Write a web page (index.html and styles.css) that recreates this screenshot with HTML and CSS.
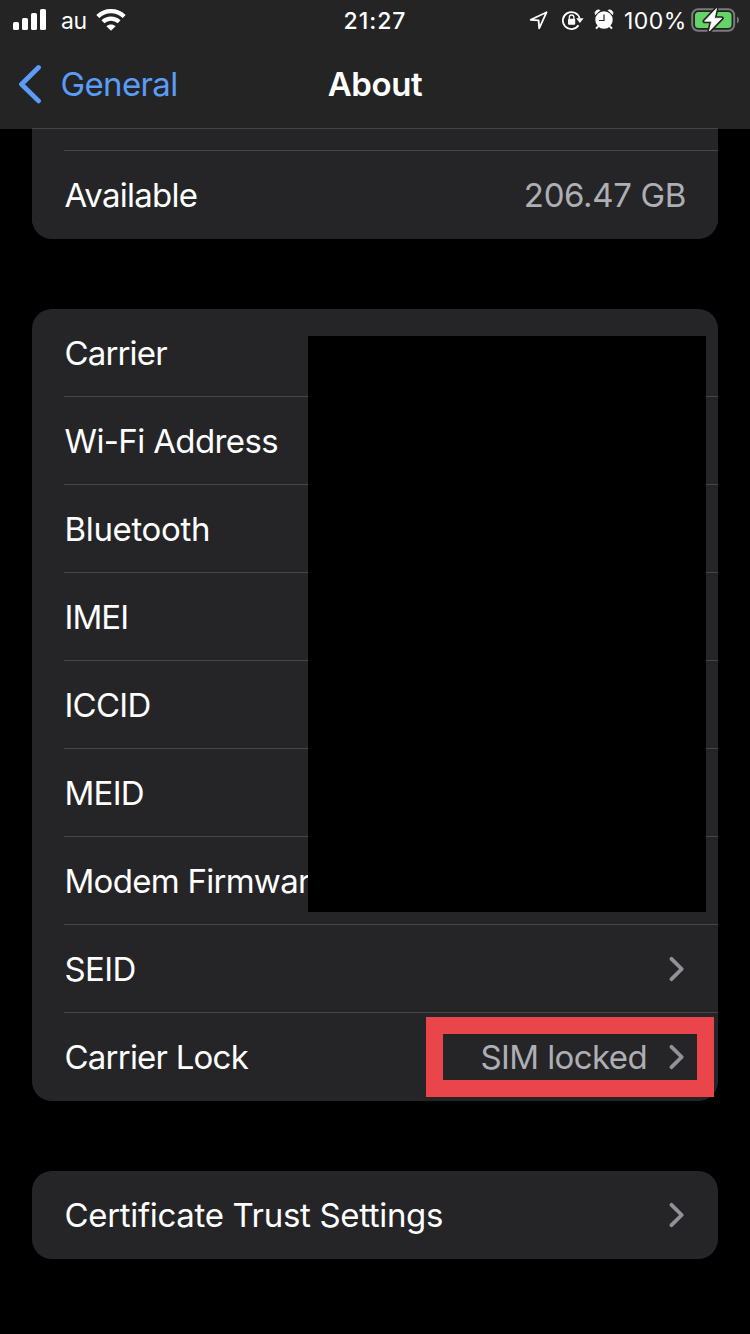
FILE: index.html
```html
<!DOCTYPE html>
<html lang="en">
<head>
<meta charset="utf-8">
<title>About</title>
<link rel="stylesheet" href="styles.css">
</head>
<body>
<div class="screen">
  <header class="top">
    <div class="status">
      <div class="status-left">
        <svg class="signal" width="34" height="22" viewBox="0 0 34 22" fill="#fff"><rect x="0" y="14" width="6" height="8" rx="1.6"/><rect x="9" y="10" width="6" height="12" rx="1.6"/><rect x="18" y="5" width="6" height="17" rx="1.6"/><rect x="27" y="1" width="6" height="21" rx="1.6"/></svg>
        <span class="network">au</span>
        <svg class="wifi" width="30" height="22" viewBox="0 0 30 22" fill="none" stroke="#fff" stroke-width="4.200"><path d="M1.800 7.600C9.300.4 20.700.4 28.200 7.600"/><path d="M6.900 12.800c4.700-4.300 11.500-4.300 16.200 0"/><path d="M15 21.800l-4.600-4.600c2.600-2.300 6.600-2.300 9.200 0z" fill="#fff" stroke="none"/></svg>
      </div>
      <time class="clock">21:27</time>
      <div class="status-right">
        <svg class="location" width="20" height="20" viewBox="0 0 20 20" fill="none" stroke="#fff" stroke-width="1.800" stroke-linejoin="round"><path d="M17.600 2.200L1.700 9.800l7.900.6.6 8z"/></svg>
        <svg class="lock" width="22" height="20" viewBox="0 0 22 20"><path d="M16.500 15.200A8.500 8.500 0 1 1 17.600 8.500" fill="none" stroke="#fff" stroke-width="1.800"/><path d="M14.200 8.300h7.400l-3.700 4.600z" fill="#fff"/><rect x="6" y="8.800" width="7.200" height="6" rx="1" fill="#fff"/><path d="M7.300 9V7.300a2.300 2.300 0 0 1 4.600 0V9" fill="none" stroke="#fff" stroke-width="1.300"/></svg>
        <svg class="alarm" width="20" height="21" viewBox="0 0 20 21"><circle cx="10" cy="11" r="8.700" fill="#fff"/><path d="M1.500 5.800a3.300 3.300 0 0 1 4.700-4.300M18.500 5.800a3.300 3.300 0 0 0-4.700-4.300" fill="#fff" stroke="#fff" stroke-width="1"/><path d="M4 17.500l-2 2.200M16 17.500l2 2.200" stroke="#fff" stroke-width="2"/><path d="M10 5.500v6H5" fill="none" stroke="#242424" stroke-width="1.200"/></svg>
        <span class="percent">100%</span>
        <svg class="battery" width="48" height="26" viewBox="0 0 48 26"><rect x="1.200" y="2.200" width="42" height="21.600" rx="6" fill="none" stroke="#7b7b7d" stroke-width="2"/><rect x="4" y="5" width="36.500" height="16" rx="3.500" fill="#63d466"/><path d="M46 9.500c2.600 1.700 2.600 5.300 0 7z" fill="#7b7b7d"/><path d="M25.500 1.500L13.500 14.200h7.200l-2.300 9.800L30.800 11.200h-7.500z" fill="#fff" stroke="#242424" stroke-width="4" stroke-linejoin="round"/><path d="M25.500 1.500L13.500 14.200h7.200l-2.300 9.800L30.800 11.200h-7.500z" fill="#fff" stroke="#fff" stroke-width=".8" stroke-linejoin="round"/></svg>
      </div>
    </div>
    <nav class="nav">
      <a class="back"><svg width="24" height="40" viewBox="0 0 24 40" fill="none" stroke="#5a9cf8" stroke-width="4.800" stroke-linecap="round" stroke-linejoin="round"><path d="M20.500 3.500L3.500 20.200l17 16.700"/></svg><span class="back-label">General</span></a>
      <h1 class="title">About</h1>
    </nav>
  </header>
  <main class="content">
    <section class="card card-cut">
      <div class="row-end"></div>
      <div class="row"><span class="label available">Available</span><span class="value storage">206.47 GB</span></div>
    </section>
    <section class="card details">
      <div class="row"><span class="label carrier">Carrier</span></div>
      <div class="row"><span class="label wifi-address">Wi-Fi Address</span></div>
      <div class="row"><span class="label bluetooth">Bluetooth</span></div>
      <div class="row"><span class="label imei">IMEI</span></div>
      <div class="row"><span class="label iccid">ICCID</span></div>
      <div class="row"><span class="label meid">MEID</span></div>
      <div class="row"><span class="label modem">Modem Firmwar</span></div>
      <div class="row"><span class="label seid">SEID</span><svg class="chevron" width="16" height="26" viewBox="0 0 16 26"><path d="M2.500 2.800L12.700 13 2.500 23.200"/></svg></div>
      <div class="row"><span class="label carrier-lock">Carrier Lock</span><span class="value sim">SIM locked</span><svg class="chevron" width="16" height="26" viewBox="0 0 16 26"><path d="M2.500 2.800L12.700 13 2.500 23.200"/></svg></div>
      <div class="redaction"></div>
      <div class="highlight"></div>
    </section>
    <section class="card">
      <div class="row"><span class="label certificate">Certificate Trust Settings</span><svg class="chevron" width="16" height="26" viewBox="0 0 16 26"><path d="M2.500 2.800L12.700 13 2.500 23.200"/></svg></div>
    </section>
  </main>
</div>
</body>
</html>
```
FILE: styles.css
```css
* { box-sizing: border-box; }
body { margin: 0; background: #000; color: #fff; font-family: Inter, "Liberation Sans", sans-serif; }
svg { display: block; flex: none; }
.screen { width: 750px; height: 1334px; overflow: hidden; background: #000; }
.top { height: 129px; background: #242424; }
.status { display: grid; grid-template-columns: 250px 250px 250px; height: 40px; align-items: center; font-size: 23px; line-height: 38px; }
.status-left { display: flex; align-items: center; padding-left: 13px; height: 40px; }
.signal { margin-top: -2px; }
.network { margin-left: 14px; padding-top: 2px; letter-spacing: -0.3px; }
.wifi { margin-left: 9px; }
.clock { padding-top: 2px; text-align: center; font-weight: 500; letter-spacing: 1px; }
.status-right { display: flex; align-items: center; height: 40px; padding-left: 29px; }
.lock { margin-left: 13px; }
.alarm { margin-left: 10px; margin-top: -2px; }
.percent { margin-left: 10px; padding-top: 2px; width: 63px; letter-spacing: 0.5px; white-space: nowrap; }
.battery { margin-left: 4px; margin-top: -1px; }
.nav { display: grid; grid-template-columns: 250px 250px 250px; height: 88px; align-items: center; }
.back { display: flex; align-items: center; padding-left: 18px; color: #5a9cf8; font-size: 33px; letter-spacing: -0.65px; }
.back-label { margin-left: 18.5px; line-height: 40px; }
.title { margin: 0; text-align: center; font-size: 33px; font-weight: 600; letter-spacing: -0.4px; line-height: 40px; }
.content { display: flex; flex-direction: column; gap: 70px; padding: 0 32px; }
.card { position: relative; border-radius: 20px; background: #252527; }
.card-cut { border-radius: 0 0 20px 20px; box-shadow: 0 -1px #444446; }
.row-end { height: 22px; margin-left: 32px; border-bottom: 1px solid #464648; }
.row { display: flex; align-items: center; height: 88px; margin-left: 32px; padding-right: 33px; border-bottom: 1px solid #464648; font-size: 33px; line-height: 40px; white-space: nowrap; }
.card .row:last-of-type { border-bottom-color: transparent; }
.details .row:nth-child(9) { border-bottom-color: transparent; }
.label { padding-left: 0.5px; }
.available { letter-spacing: -0.75px; }
.carrier { letter-spacing: -0.85px; }
.wifi-address { letter-spacing: -0.62px; }
.bluetooth { letter-spacing: -0.35px; }
.imei { letter-spacing: -0.9px; }
.iccid { letter-spacing: -0.75px; }
.meid { letter-spacing: -0.75px; }
.modem { letter-spacing: -0.72px; }
.seid { letter-spacing: -0.6px; }
.carrier-lock { letter-spacing: -0.78px; }
.certificate { letter-spacing: -0.33px; }
.value { margin-left: auto; color: #aeaeb5; }
.storage { letter-spacing: -0.35px; margin-right: -1px; }
.sim { letter-spacing: -0.6px; }
.chevron { margin-left: auto; fill: none; stroke: #929298; stroke-width: 3.8; stroke-linecap: round; stroke-linejoin: round; }
.value + .chevron { margin-left: 22px; }
.redaction { position: absolute; left: 276px; top: 27px; width: 398px; height: 576px; background: #000; }
.highlight { position: absolute; left: 394px; top: 708px; width: 288px; height: 80px; border: 17px solid #e9454a; }
```
